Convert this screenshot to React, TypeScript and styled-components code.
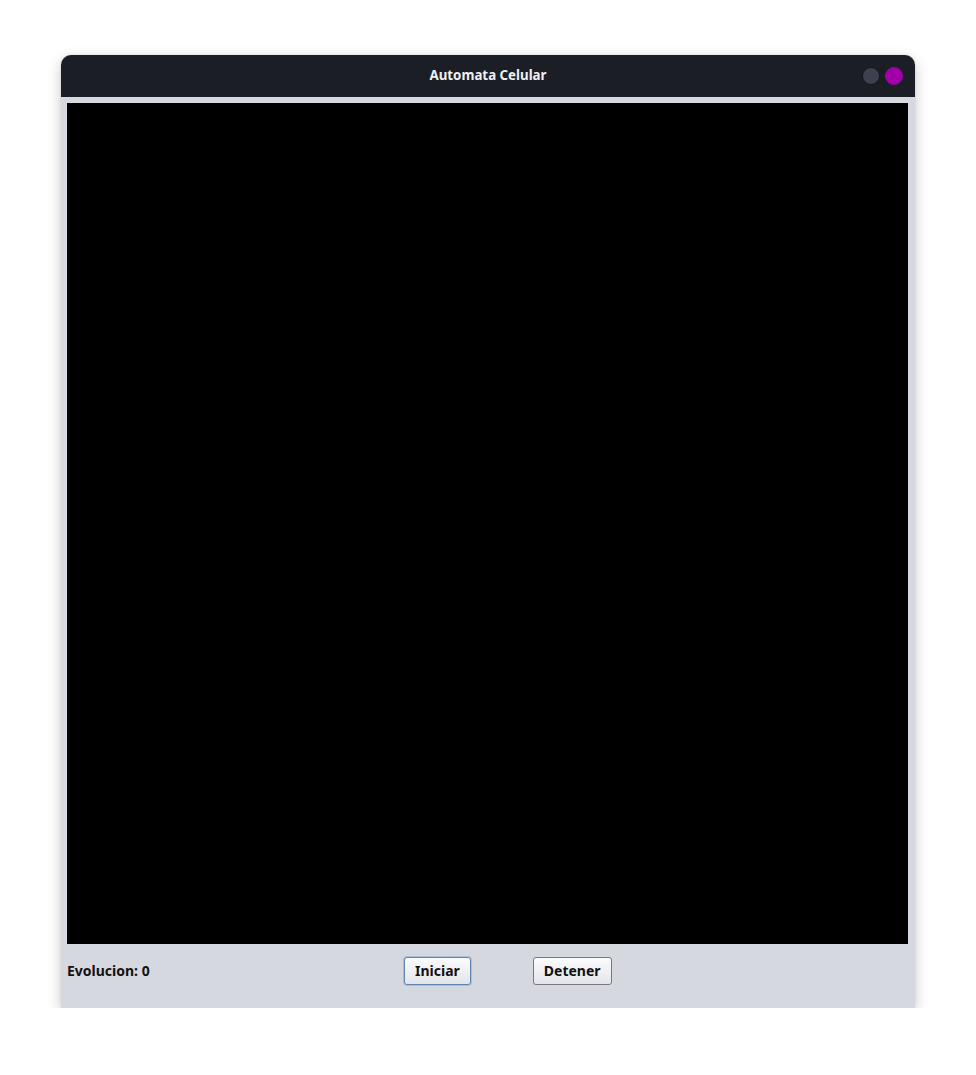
import React from "react";
import styled, { createGlobalStyle } from "styled-components";

const Global = createGlobalStyle`
  html, body { margin: 0; padding: 0; background: #ffffff; }
  body { font-family: "Noto Sans", "DejaVu Sans", sans-serif; }
`;

const Page = styled.div`
  padding: 55px 0 0 61px;
`;

const Window = styled.div`
  width: 854px;
  height: 953px;
  display: flex;
  flex-direction: column;
  background: #d6d8df;
  border-radius: 10px 10px 2px 2px;
  overflow: hidden;
  box-shadow: 0 4px 14px rgba(0, 0, 0, 0.22), 0 0 2px rgba(0, 0, 0, 0.12);
`;

const TitleBar = styled.div`
  height: 42px;
  flex: none;
  background: #1b1e25;
  position: relative;
  display: flex;
  align-items: center;
  justify-content: center;
  padding-bottom: 2px;
  box-sizing: border-box;
`;

const Title = styled.div`
  color: #eef0f2;
  font-size: 13.3px;
  font-weight: 700;
`;

const Controls = styled.div`
  position: absolute;
  right: 12px;
  top: 12px;
  display: flex;
  gap: 5px;
`;

const Dot = styled.div<{ $color: string; $border: string }>`
  width: 18px;
  height: 18px;
  border-radius: 50%;
  box-sizing: border-box;
  background: ${(p) => p.$color};
  border: 1px solid ${(p) => p.$border};
`;

const Body = styled.div`
  flex: 1;
  display: flex;
  flex-direction: column;
  padding: 6px 7px 0 6px;
`;

const Canvas = styled.div`
  width: 841px;
  height: 841px;
  flex: none;
  background: #000000;
`;

const Footer = styled.div`
  flex: 1;
  display: flex;
  align-items: center;
  padding-bottom: 11px;
  box-sizing: border-box;
`;

const Label = styled.div`
  width: 337px;
  font-size: 14px;
  font-weight: 700;
  color: #111111;
`;

const Button = styled.button<{ $focused?: boolean }>`
  height: 28px;
  box-sizing: border-box;
  padding: 0 10px;
  font-family: "Noto Sans", "DejaVu Sans", sans-serif;
  font-size: 14px;
  font-weight: 700;
  color: #111111;
  background: linear-gradient(#fbfbfc, #e4e5e9);
  border-radius: 3px;
  border: 1px solid ${(p) => (p.$focused ? "#5f84b0" : "#77797f")};
  box-shadow: ${(p) => (p.$focused ? "0 0 0 1px #a9c0dc" : "none")};
  cursor: pointer;
`;

const Spacer = styled.div`
  width: 62px;
`;

export default function App() {
  return (
    <>
      <Global />
      <Page>
        <Window>
          <TitleBar>
            <Title>Automata Celular</Title>
            <Controls>
              <Dot $color="#3d404e" $border="#15171c" />
              <Dot $color="#a100a8" $border="#a100a8" />
            </Controls>
          </TitleBar>
          <Body>
            <Canvas />
            <Footer>
              <Label>Evolucion: 0</Label>
              <Button $focused>Iniciar</Button>
              <Spacer />
              <Button>Detener</Button>
            </Footer>
          </Body>
        </Window>
      </Page>
    </>
  );
}
